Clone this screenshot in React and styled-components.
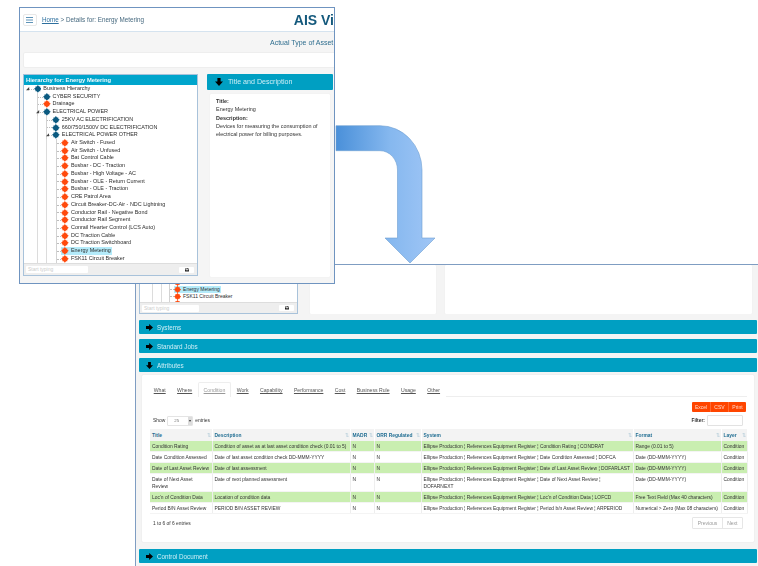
import React from 'react';
import styled, { createGlobalStyle } from 'styled-components';
import { FaPrint } from 'react-icons/fa';

const GlobalStyle = createGlobalStyle`
    html, body { margin: 0; padding: 0; background: #fff; }
    * { box-sizing: border-box; }
`;

const Desktop = styled.div`
    position: relative;
    width: 758px;
    height: 566px;
    overflow: hidden;
    background: #fff;
    font-family: "Liberation Sans", Arial, sans-serif;
    color: #333;
`;

// the two overlapping browser captures
const BackWindow = styled.section`
    position: absolute;
    left: 135px;
    top: 264px;
    width: 623px;
    height: 302px;
    overflow: hidden;
    background: #f4f4f4;
    border-left: 1px solid #7f9dc2;
    border-top: 1px solid #7f9dc2;
`;
const BackContent = styled.div`
    padding: 0 1px 0 3px;
    filter: blur(0.3px);
`;
const FrontWindow = styled.section`
    position: absolute;
    left: 19px;
    top: 7px;
    width: 316px;
    height: 277px;
    overflow: hidden;
    background: #f5f5f5;
    border: 1px solid #6f94c0;
`;
const FrontContent = styled.div`
    filter: blur(0.3px);
`;
const ArrowSvg = styled.svg`
    position: absolute;
    left: 330px;
    top: 120px;
`;

const TopBar = styled.header`
    display: flex;
    align-items: center;
    height: 24px;
    padding-left: 3px;
    background: #fff;
    border-bottom: 1px solid #d5e3ef;
`;
const MenuButton = styled.div`
    display: flex;
    align-items: center;
    justify-content: center;
    width: 14px;
    height: 12px;
    border: 1px solid #e8e8e8;
    border-radius: 2px;
    svg { display: block; }
`;
const Crumbs = styled.div`
    width: 259px;
    padding-left: 5px;
    font-size: 6.3px;
    color: #46697f;
    white-space: nowrap;
    a { color: #2d6f9e; text-decoration: underline; }
`;
const AppTitle = styled.div`
    font-size: 14px;
    font-weight: 700;
    color: #14597c;
    white-space: nowrap;
`;
const SubTitle = styled.div`
    height: 20px;
    line-height: 22px;
    padding-left: 250px;
    font-size: 7px;
    color: #2f6e8f;
    white-space: nowrap;
`;
const EmptyBar = styled.div`
    height: 16px;
    margin: 0 -4px 6px 3px;
    background: #fff;
    border: 1px solid #eee;
    border-radius: 2px;
`;
const PanelRow = styled.div`
    display: flex;
    padding-left: 3px;
`;
const RightColumn = styled.div`
    width: 126px;
    margin-left: 9px;
`;
const TealBar = styled.div`
    display: flex;
    align-items: center;
    gap: ${p => p.$gap || 4}px;
    height: ${p => p.$h || 14}px;
    padding-left: ${p => p.$pad || 7}px;
    background: #009fc2;
    border-radius: 1px;
    color: #cdeef6;
    font-size: ${p => p.$size || 6.3}px;
    svg { flex: none; }
`;
const InfoCard = styled.div`
    width: 120px;
    height: 183px;
    margin: 4px 0 0 3px;
    padding: 4px 6px;
    background: #fff;
    border-radius: 1px;
    box-shadow: 0 0 1px #ddd;
    font-size: 5.45px;
    line-height: 7.7px;
    b { display: block; }
    p { margin: 0 0 2px; }
`;

// hierarchy tree, all sizes in em so the two captures can share it
const TreePanel = styled.div`
    flex: none;
    display: flex;
    flex-direction: column;
    width: ${p => p.$w}px;
    height: ${p => p.$h}px;
    background: #fff;
    border: 1px solid #a8c2da;
    font-size: ${p => p.$size}px;
`;
const TreeHead = styled.div`
    flex: none;
    height: 10px;
    padding-left: 2px;
    background: #00a5cc;
    color: #f0fbfe;
    font-size: 5.8px;
    font-weight: 700;
    line-height: 10px;
`;
const TreeBody = styled.div`
    flex: 1;
    min-height: 0;
    overflow: hidden;
    padding-left: .734em;
    display: flex;
    flex-direction: column;
    justify-content: ${p => (p.$bottom ? 'flex-end' : 'flex-start')};
    ${p => p.$bottom && '& > :last-child { margin-bottom: -1em; }'}
`;
const Row = styled.div`
    flex: none;
    display: flex;
    height: 1.418em;
    line-height: 1.418em;
    white-space: nowrap;
    color: #2c2c2c;
`;
const Indent = styled.span`
    flex: none;
    width: 1.69em;
    border-left: ${p => (p.$first ? 'none' : '1px solid #dcdcdc')};
`;
const Connector = styled.span`
    position: relative;
    flex: none;
    width: 1.05em;
    border-left: ${p => (p.$root ? 'none' : '1px solid #d2d2d2')};
    &::after {
        content: '';
        position: absolute;
        left: 0;
        right: 0;
        top: 50%;
        border-top: 1px dotted #bdbdbd;
    }
`;
const Expander = styled.svg`
    position: absolute;
    z-index: 1;
    left: -.35em;
    top: .35em;
    width: .7em;
    height: .7em;
`;
const Node = styled.span`
    display: inline-flex;
    align-items: center;
    height: 100%;
    padding-right: 1px;
    background: ${p => (p.$selected ? '#b4ebfa' : 'transparent')};
    svg { flex: none; width: 1.42em; height: 1.42em; margin-right: .35em; }
`;
const TreeFoot = styled.div`
    flex: none;
    display: flex;
    align-items: center;
    justify-content: space-between;
    height: ${p => p.$h}px;
    padding: 0 3px 0 2px;
    background: #eee;
    border-top: 1px solid #ddd;
`;
const FootInput = styled.div`
    width: ${p => p.$w}px;
    height: 7px;
    padding-left: 2px;
    background: #fff;
    border-radius: 1px;
    color: #ccc;
    font-size: 5px;
    line-height: 7px;
`;
const FootButton = styled.div`
    display: flex;
    align-items: center;
    justify-content: center;
    width: 15px;
    height: 6px;
    background: #fff;
    border-radius: 1px;
    svg { color: #222; width: 4px; height: 4px; }
`;

const TopRow = styled.div`
    display: flex;
    align-items: flex-end;
    height: 49px;
    overflow: hidden;
    margin-bottom: 6px;
`;
const BlankCard = styled.div`
    flex: none;
    width: ${p => p.$w}px;
    height: 49px;
    margin-left: ${p => p.$ml}px;
    background: #fff;
    border-radius: 1px;
    box-shadow: 0 0 1px #ddd;
`;
const Bars = styled.div`
    display: flex;
    flex-direction: column;
    gap: 5px;
`;
const AttrCard = styled.div`
    height: 167px;
    margin: -2px 3px 2px;
    padding: 7px 7px 0 8px;
    background: #fff;
    border-radius: 1px;
    box-shadow: 0 0 1px #ccc;
    font-size: 4.9px;
`;
const Tabs = styled.nav`
    display: flex;
    height: 15px;
    margin-left: -2px;
    border-bottom: 1px solid #eee;
`;
const Tab = styled.span`
    padding: 0 5.7px;
    height: 15px;
    line-height: 16px;
    font-size: 5.15px;
    color: ${p => (p.$active ? '#999' : '#555')};
    text-decoration: underline;
    background: #fff;
    white-space: nowrap;
    ${p => p.$active && 'border: 1px solid #eee; border-bottom: 0; border-radius: 2px 2px 0 0; padding: 0 4.7px; line-height: 14px;'}
`;
const ButtonRow = styled.div`
    display: flex;
    justify-content: flex-end;
    padding: 5px 1px 0 0;
`;
const ExportButton = styled.span`
    display: block;
    width: ${p => p.$w}px;
    height: 10px;
    line-height: 10px;
    text-align: center;
    background: #ff4500;
    color: #ffd9c8;
    font-size: 5px;
    border-right: 1px solid #ff6a33;
    &:first-child { border-radius: 1px 0 0 1px; }
    &:last-child { border: 0; border-radius: 0 1px 1px 0; }
`;
const Controls = styled.div`
    display: flex;
    align-items: center;
    justify-content: space-between;
    height: 11px;
    margin: 3px 4px 3px 3px;
`;
const Inline = styled.div`
    display: flex;
    align-items: center;
    gap: 2px;
`;
const Select = styled.div`
    display: flex;
    align-items: center;
    justify-content: space-between;
    width: 26px;
    height: 10px;
    padding-left: 6px;
    border: 1px solid #e4e4e4;
    border-radius: 1px;
    color: #777;
    font-size: 4.4px;
    span { width: 4px; height: 100%; background: #ddd; color: #333; font-size: 3.5px; line-height: 8px; text-align: center; }
`;
const FilterInput = styled.div`
    width: 36px;
    height: 11px;
    border: 1px solid #e2e2e2;
    border-radius: 1px;
    background: #fff;
`;
const Table = styled.table`
    width: 597px;
    table-layout: fixed;
    border-collapse: collapse;
    font-size: 4.9px;
    line-height: 7px;
    color: #333;
`;
const Th = styled.th`
    position: relative;
    width: ${p => p.$w}px;
    height: 12px;
    padding: 0 2px;
    background: #f3f3f3;
    color: #1f6d92;
    font-weight: 700;
    text-align: left;
    border-right: 1px solid #fff;
    &::after {
        content: '⇅';
        position: absolute;
        right: 1px;
        top: 3px;
        color: #b9cfdb;
        font-weight: 400;
        font-size: 4.5px;
    }
`;
const Tr = styled.tr`
    background: ${p => (p.$green ? '#c9eeb0' : '#fff')};
    td {
        padding: 2px 2px 1px;
        vertical-align: top;
        border-right: 1px solid #eee;
        border-bottom: 1px solid #f4f4f4;
    }
`;
const Footer = styled.div`
    display: flex;
    align-items: center;
    justify-content: space-between;
    margin: 3px 4px 0 3px;
`;
const Pager = styled.div`
    display: flex;
    height: 12px;
    border: 1px solid #e6e6e6;
    border-radius: 1px;
    color: #999;
    font-size: 5px;
    line-height: 10px;
    span { padding: 0 4.5px; }
    span + span { border-left: 1px solid #e6e6e6; }
`;

const Diamond = ({ orange }) => (
    <svg viewBox="0 0 14 14">
        <path
            d="M7 0 L9.2 2.6 L11.4 2.6 L11.4 4.8 L14 7 L11.4 9.2 L11.4 11.4 L9.2 11.4 L7 14 L4.8 11.4 L2.6 11.4 L2.6 9.2 L0 7 L2.6 4.8 L2.6 2.6 L4.8 2.6 Z"
            fill={ orange ? '#ff4a0d' : '#0b5a80' }
        />
    </svg>
);

// heavy arrows of the collapsible section headers
const SectionArrow = ({ down, size = 7 }) => (
    <svg width={ size } height={ size } viewBox="0 0 10 10">
        <path
            d={ down ? 'M3 0H7V4.5H10L5 10L0 4.5H3Z' : 'M0 3H4.5V0L10 5L4.5 10V7H0Z' }
            fill="#000"
        />
    </svg>
);

const TreeRow = ({ level, label, orange, open, selected }) => (
    <Row>
        { Array.from({ length: level }).map((_, i) => <Indent key={ i } $first={ i === 0 } />) }
        <Connector $root={ level === 0 }>
            { open && (
                <Expander viewBox="0 0 6 6">
                    <path d="M0 5 L5 5 L5 0 Z" fill="#444" />
                </Expander>
            ) }
        </Connector>
        <Node $selected={ selected }>
            <Diamond orange={ orange } />
            { label }
        </Node>
    </Row>
);

const equipment = [
    'Air Switch - Fused', 'Air Switch - Unfused', 'Bat Control Cable', 'Busbar - DC - Traction',
    'Busbar - High Voltage - AC', 'Busbar - OLE - Return Current', 'Busbar - OLE - Traction',
    'CRE Patrol Area', 'Circuit Breaker-DC-Air - NDC Lightning', 'Conductor Rail - Negative Bond',
    'Conductor Rail Segment', 'Conrail Hearter Control (LCS Auto)', 'DC Traction Cable',
    'DC Traction Switchboard',
];

const columns = [
    ['Title', 62], ['Description', 138], ['MADR', 24], ['ORR Regulated', 47],
    ['System', 212], ['Format', 88], ['Layer', 26],
];

const ellipse = 'Ellipse Production ¦ References Equipment Register ¦ ';
const tableRows = [
    ['Condition Rating', 'Condition of asset as at last asset condition check (0.01 to 5)', 'Condition Rating ¦ CONDRAT', 'Range (0.01 to 5)'],
    ['Date Condition Assessed', 'Date of last asset condition check DD-MMM-YYYY', 'Date Condition Assessed ¦ DOFCA', 'Date (DD-MMM-YYYY)'],
    ['Date of Last Asset Review', 'Date of last assessment', 'Date of Last Asset Review ¦ DOFARLAST', 'Date (DD-MMM-YYYY)'],
    ['Date of Next Asset Review', 'Date of next planned assessment', 'Date of Next Asset Review ¦ DOFARNEXT', 'Date (DD-MMM-YYYY)'],
    ["Loc'n of Condition Data", 'Location of condition data', "Loc'n of Condition Data ¦ LOFCD", 'Free Text Field (Max 40 characters)'],
    ['Period B/N Asset Review', 'PERIOD B/N ASSET REVIEW', 'Period b/n Asset Review ¦ ARPERIOD', 'Numerical > Zero (Max 08 characters)'],
];

const tabs = ['What', 'Where', 'Condition', 'Work', 'Capability', 'Performance', 'Cost', 'Business Rule', 'Usage', 'Other'];

const App = () => (
    <Desktop>
        <GlobalStyle />

        <BackWindow>
            <BackContent>
                <TopRow>
                    <TreePanel $w={ 159 } $h={ 49 } $size={ 5 }>
                        <TreeBody $bottom>
                            <TreeRow level={ 3 } label="DC Traction Switchboard" orange />
                            <TreeRow level={ 3 } label="Energy Metering" orange selected />
                            <TreeRow level={ 3 } label="FSK11 Circuit Breaker" orange />
                            <TreeRow level={ 3 } label="" orange />
                        </TreeBody>
                        <TreeFoot $h={ 11 }>
                            <FootInput $w={ 57 }>Start typing</FootInput>
                            <FootButton><FaPrint /></FootButton>
                        </TreeFoot>
                    </TreePanel>
                    <BlankCard $w={ 126 } $ml={ 12 } />
                    <BlankCard $w={ 307 } $ml={ 9 } />
                </TopRow>
                <Bars>
                    <TealBar><SectionArrow />Systems</TealBar>
                    <TealBar><SectionArrow />Standard Jobs</TealBar>
                    <TealBar><SectionArrow down />Attributes</TealBar>
                    <AttrCard>
                        <Tabs>
                            { tabs.map(t => <Tab key={ t } $active={ t === 'Condition' }>{ t }</Tab>) }
                        </Tabs>
                        <ButtonRow>
                            <ExportButton $w={ 19 }>Excel</ExportButton>
                            <ExportButton $w={ 18 }>CSV</ExportButton>
                            <ExportButton $w={ 17 }>Print</ExportButton>
                        </ButtonRow>
                        <Controls>
                            <Inline>Show <Select>25<span>▾</span></Select> entries</Inline>
                            <Inline><b>Filter:</b> <FilterInput /></Inline>
                        </Controls>
                        <Table>
                            <thead>
                                <tr>
                                    { columns.map(([name, w]) => <Th key={ name } $w={ w }>{ name }</Th>) }
                                </tr>
                            </thead>
                            <tbody>
                                { tableRows.map((r, i) => (
                                    <Tr key={ r[0] } $green={ i % 2 === 0 }>
                                        <td>{ r[0] }</td>
                                        <td>{ r[1] }</td>
                                        <td>N</td>
                                        <td>N</td>
                                        <td>{ ellipse + r[2] }</td>
                                        <td>{ r[3] }</td>
                                        <td>Condition</td>
                                    </Tr>
                                )) }
                            </tbody>
                        </Table>
                        <Footer>
                            <span>1 to 6 of 6 entries</span>
                            <Pager><span>Previous</span><span>Next</span></Pager>
                        </Footer>
                    </AttrCard>
                    <TealBar><SectionArrow />Control Document</TealBar>
                </Bars>
            </BackContent>
        </BackWindow>

        <ArrowSvg width="115" height="150" viewBox="330 120 115 150">
            <defs>
                <linearGradient id="arrowFill" x1="0" y1="0" x2="1" y2="0">
                    <stop offset="0" stopColor="#4a90d9" />
                    <stop offset="0.55" stopColor="#86b8ef" />
                    <stop offset="1" stopColor="#a0c6f6" />
                </linearGradient>
            </defs>
            <path
                d="M336 125.7 L380 125.7 A42 44.3 0 0 1 422 170 L422 238 L435 238 L410 263 L385 238 L397.5 238 L397.5 170 A17.5 19.3 0 0 0 380 150.7 L336 150.7 Z"
                fill="url(#arrowFill)"
                stroke="#6f9fd2"
                strokeWidth="0.6"
            />
        </ArrowSvg>

        <FrontWindow>
            <FrontContent>
                <TopBar>
                    <MenuButton>
                        <svg width="7" height="6" viewBox="0 0 7 6">
                            <path d="M0 .5H7M0 3H7M0 5.5H7" stroke="#5f94b8" strokeWidth="1" />
                        </svg>
                    </MenuButton>
                    <Crumbs><a>Home</a> &gt; Details for: Energy Metering</Crumbs>
                    <AppTitle>AIS Vi</AppTitle>
                </TopBar>
                <SubTitle>Actual Type of Asset</SubTitle>
                <EmptyBar />
                <PanelRow>
                    <TreePanel $w={ 175 } $h={ 202 } $size={ 5.45 }>
                        <TreeHead>Hierarchy for: Energy Metering</TreeHead>
                        <TreeBody>
                            <TreeRow level={ 0 } label="Business Hierarchy" open />
                            <TreeRow level={ 1 } label="CYBER SECURITY" />
                            <TreeRow level={ 1 } label="Drainage" orange />
                            <TreeRow level={ 1 } label="ELECTRICAL POWER" open />
                            <TreeRow level={ 2 } label="25KV AC ELECTRIFICATION" />
                            <TreeRow level={ 2 } label="660/750/1500V DC ELECTRIFICATION" />
                            <TreeRow level={ 2 } label="ELECTRICAL POWER OTHER" open />
                            { equipment.map(name => <TreeRow key={ name } level={ 3 } label={ name } orange />) }
                            <TreeRow level={ 3 } label="Energy Metering" orange selected />
                            <TreeRow level={ 3 } label="FSK11 Circuit Breaker" orange />
                            <TreeRow level={ 3 } label="" orange />
                        </TreeBody>
                        <TreeFoot $h={ 12 }>
                            <FootInput $w={ 62 }>Start typing</FootInput>
                            <FootButton><FaPrint /></FootButton>
                        </TreeFoot>
                    </TreePanel>
                    <RightColumn>
                        <TealBar $h={ 16 } $size={ 7.1 } $pad={ 8 } $gap={ 5 }>
                            <SectionArrow down size={ 8 } />Title and Description
                        </TealBar>
                        <InfoCard>
                            <b>Title:</b>
                            <p>Energy Metering</p>
                            <b>Description:</b>
                            <p>Devices for measuring the consumption of electrical power for billing purposes.</p>
                        </InfoCard>
                    </RightColumn>
                </PanelRow>
            </FrontContent>
        </FrontWindow>
    </Desktop>
);

export default App;
